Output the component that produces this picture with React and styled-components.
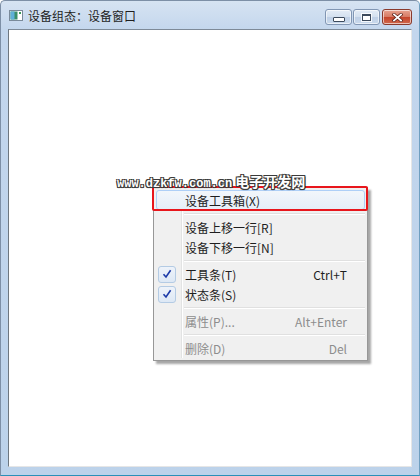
import React from 'react';
import styled, { createGlobalStyle } from 'styled-components';

const GlobalStyle = createGlobalStyle`
  html, body { margin: 0; padding: 0; background: #ffffff; }
  #root { width: 420px; height: 476px; }
`;

const menuItems = [
    { label: '设备工具箱(X)', highlight: true },
    { sep: true },
    { label: '设备上移一行[R]' },
    { label: '设备下移一行[N]' },
    { sep: true },
    { label: '工具条(T)', shortcut: 'Ctrl+T', checked: true },
    { label: '状态条(S)', checked: true },
    { sep: true },
    { label: '属性(P)...', shortcut: 'Alt+Enter', disabled: true },
    { sep: true },
    { label: '删除(D)', shortcut: 'Del', disabled: true },
];

function WindowIcon() {
    return (
        <svg width="14" height="11" viewBox="0 0 14 11">
            <rect x="0.5" y="0.5" width="13" height="10" fill="#ffffff" stroke="#7a8a9a" />
            <rect x="1.5" y="1.5" width="7" height="8" fill="#3a8f6a" />
            <rect x="1.5" y="1.5" width="4" height="8" fill="#5fb0d8" />
            <rect x="10" y="2" width="2" height="2" fill="#3a9a5a" />
        </svg>
    );
}

function CheckIcon() {
    return (
        <svg width="10" height="10" viewBox="0 0 10 10">
            <path d="M1.5 5.2 L4 8 L8.6 1.2" fill="none" stroke="#1c3aa8" strokeWidth="1.6" />
        </svg>
    );
}

function App() {
    return (
        <>
            <GlobalStyle />
            <Window>
                <TitleBar>
                    <WindowIcon />
                    <Title>设备组态：设备窗口</Title>
                    <Controls>
                        <CaptionButton>
                            <MinGlyph />
                        </CaptionButton>
                        <CaptionButton>
                            <MaxGlyph />
                        </CaptionButton>
                        <CloseButton>
                            <svg width="11" height="9" viewBox="0 0 11 9">
                                <path d="M2 1.5 L9 7.5 M9 1.5 L2 7.5" stroke="#5a2018" strokeWidth="3.2" strokeLinecap="square" />
                                <path d="M2 1.5 L9 7.5 M9 1.5 L2 7.5" stroke="#ffffff" strokeWidth="1.8" strokeLinecap="square" />
                            </svg>
                        </CloseButton>
                    </Controls>
                </TitleBar>
                <Client>
                    <Watermark>
                        <WatermarkLatin>www.dzkfw.com.cn</WatermarkLatin>
                        <WatermarkCjk>电子开发网</WatermarkCjk>
                    </Watermark>
                    <Menu>
                        <Gutter />
                        {menuItems.map((item, i) =>
                            item.sep ? (
                                <Separator key={i} />
                            ) : (
                                <Item key={i} $highlight={item.highlight} $disabled={item.disabled}>
                                    <CheckCell>
                                        {item.checked && (
                                            <CheckBox>
                                                <CheckIcon />
                                            </CheckBox>
                                        )}
                                    </CheckCell>
                                    <Label>{item.label}</Label>
                                    {item.shortcut && <Shortcut>{item.shortcut}</Shortcut>}
                                </Item>
                            )
                        )}
                        <RedMark />
                    </Menu>
                </Client>
            </Window>
        </>
    );
}

const Window = styled.div`
    box-sizing:border-box;
    width:420px;
    height:476px;
    display:flex;
    flex-direction:column;
    border:1px solid #7d8fa6;
    border-bottom-color:#2a90b8;
    border-right-color:#6f9fc0;
    border-radius:5px 5px 0 0;
    background:linear-gradient(#d6e3f2 0px, #c3d6ed 30px, #bcd2ea 100%);
    font-family:"Noto Sans CJK SC", "Noto Sans", sans-serif;
`;
const TitleBar = styled.div`
    height:28px;
    display:flex;
    align-items:center;
    padding:0 0 0 8px;
    flex-shrink:0;
`;
const Title = styled.span`
    margin-left:5px;
    font-size:12px;
    color:#1e1e1e;
    margin-top:1px;
`;
const Controls = styled.div`
    margin-left:auto;
    margin-right:7px;
    margin-top:1px;
    display:flex;
    gap:1px;
    align-self:flex-start;
    padding-top:7px;
`;
const CaptionButton = styled.div`
    box-sizing:border-box;
    width:27px;
    height:16px;
    border:1px solid #8196b3;
    border-radius:3px;
    background:linear-gradient(#e4ecf6 0%, #d3e0ef 50%, #bfd0e6 51%, #c9d9ec 100%);
    box-shadow:inset 0 0 0 1px rgba(255,255,255,0.6);
    display:flex;
    align-items:center;
    justify-content:center;
`;
const CloseButton = styled(CaptionButton)`
    width:30px;
    margin-left:1px;
    border-color:#8a3a2c;
    background:linear-gradient(#e8a390 0%, #d67a63 50%, #c5442a 51%, #d0684c 100%);
`;
const MinGlyph = styled.div`
    width:10px;
    height:3px;
    margin-top:4px;
    background:#ffffff;
    border:1px solid #3c4a5c;
    border-radius:1px;
`;
const MaxGlyph = styled.div`
    width:7px;
    height:4px;
    border:1px solid #3c4a5c;
    border-top-width:2px;
    background:#ffffff;
    outline:1px solid rgba(255,255,255,0.8);
`;
const Client = styled.div`
    position:relative;
    flex:1;
    margin:0 7px 8px 7px;
    background:#ffffff;
    border:1px solid #a7b9cf;
    border-top-color:#7e8a98;
    border-left-color:#6e7780;
    border-bottom-color:#e6e6e6;
    border-right-color:#e6e6e6;
`;
const Watermark = styled.div`
    position:absolute;
    left:108px;
    top:141px;
    display:flex;
    align-items:baseline;
    gap:3px;
    color:#ffffff;
    white-space:nowrap;
    text-shadow:-1px -1px 0 #3a3a3a, 1px -1px 0 #3a3a3a, -1px 1px 0 #3a3a3a, 1px 1px 0 #3a3a3a, 0 1px 1px #3a3a3a, 1px 0 1px #3a3a3a;
    z-index:3;
`;
const WatermarkLatin = styled.span`
    font-family:"Liberation Mono", monospace;
    font-weight:bold;
    font-size:12px;
`;
const WatermarkCjk = styled.span`
    font-family:"Noto Sans CJK SC", sans-serif;
    font-size:14px;
    font-weight:bold;
`;
const Menu = styled.div`
    position:absolute;
    left:144px;
    top:157px;
    width:215px;
    box-sizing:border-box;
    padding:2px;
    background:#f0f0f0;
    border:1px solid #979797;
    box-shadow:3px 3px 2px rgba(0,0,0,0.35);
    font-size:12px;
    z-index:2;
`;
const Gutter = styled.div`
    position:absolute;
    left:27px;
    top:2px;
    bottom:2px;
    width:1px;
    background:#e2e3e3;
    border-right:1px solid #ffffff;
`;
const Item = styled.div`
    position:relative;
    height:20px;
    box-sizing:border-box;
    display:flex;
    align-items:center;
    color:${p => p.$disabled ? '#8d8d8d' : '#1e1e1e'};
    border:1px solid ${p => p.$highlight ? '#aecff7' : 'transparent'};
    border-radius:3px;
    background:${p => p.$highlight ? 'linear-gradient(#f2f6fb, #e5eef8)' : 'transparent'};
`;
const CheckCell = styled.div`
    width:27px;
    flex-shrink:0;
    display:flex;
    align-items:center;
    padding-left:1px;
`;
const CheckBox = styled.div`
    width:18px;
    height:17px;
    box-sizing:border-box;
    border:1px solid #b4cbe4;
    border-radius:3px;
    background:linear-gradient(#eef3fa, #dde8f5);
    display:flex;
    align-items:center;
    justify-content:center;
`;
const Label = styled.span`
    flex:1;
    white-space:nowrap;
`;
const Shortcut = styled.span`
    margin-right:17px;
    white-space:nowrap;
`;
const Separator = styled.div`
    height:1px;
    margin:3px 0 2px 28px;
    background:#e0e0e0;
    border-bottom:1px solid #ffffff;
`;
const RedMark = styled.div`
    position:absolute;
    left:-2px;
    top:-2px;
    width:216px;
    height:25px;
    box-sizing:border-box;
    border:2px solid #e8161c;
    border-radius:2px;
    pointer-events:none;
`;

export default App;
